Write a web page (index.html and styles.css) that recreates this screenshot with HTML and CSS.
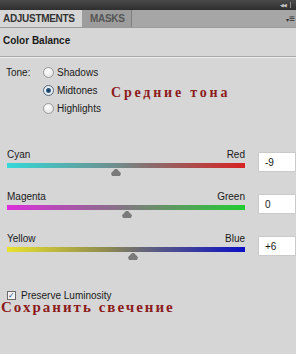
FILE: index.html
```html
<!DOCTYPE html>
<html lang="ru">
<head>
    <meta charset="UTF-8">
    <title>Color Balance</title>
    <link rel="stylesheet" href="styles.css">
</head>
<body>
    <div class="panel">
        <div class="titlebar">
            <span class="collapse">&#9664;&#9664;</span>
        </div>
        <div class="tabs">
            <div class="tab active">ADJUSTMENTS</div>
            <div class="tab">MASKS</div>
            <div class="tabfill">
                <span class="menu">&#9662;<span class="lines">&#8801;</span></span>
            </div>
        </div>
        <div class="header">Color Balance</div>

        <div class="tone">
            <div class="tone-label">Tone:</div>
            <div class="radios">
                <label class="radio"><span class="dot"></span><span class="rtext">Shadows</span></label>
                <label class="radio"><span class="dot on"></span><span class="rtext">Midtones</span><span class="note mid">Средние тона</span></label>
                <label class="radio"><span class="dot"></span><span class="rtext">Highlights</span></label>
            </div>
        </div>

        <div class="sliders">
            <div class="slider">
                <div class="track">
                    <div class="names"><span>Cyan</span><span>Red</span></div>
                    <div class="bar cr"></div>
                    <div class="thumbrow"><span class="thumb" style="left: 104px"></span></div>
                </div>
                <div class="value">-9</div>
            </div>
            <div class="slider">
                <div class="track">
                    <div class="names"><span>Magenta</span><span>Green</span></div>
                    <div class="bar mg"></div>
                    <div class="thumbrow"><span class="thumb" style="left: 115px"></span></div>
                </div>
                <div class="value">0</div>
            </div>
            <div class="slider">
                <div class="track">
                    <div class="names"><span>Yellow</span><span>Blue</span></div>
                    <div class="bar yb"></div>
                    <div class="thumbrow"><span class="thumb" style="left: 121px"></span></div>
                </div>
                <div class="value">+6</div>
            </div>
        </div>

        <label class="check"><span class="box">&#10003;</span>Preserve Luminosity</label>
        <div class="note keep">Сохранить свечение</div>
    </div>
</body>
</html>
```

FILE: styles.css
```css
body {
    margin: 0;
    background: #d6d6d6;
    font-family: "Liberation Sans", Arial, sans-serif;
    font-size: 10px;
    color: #1a1a1a;
}

.panel {
    width: 296px;
    height: 354px;
    background: #d6d6d6;
    overflow: hidden;
}

.titlebar {
    height: 10px;
    background: linear-gradient(to bottom, #4a4a4a, #2e2e2e);
    display: flex;
    justify-content: flex-end;
    align-items: center;
    padding-right: 5px;
}

.collapse {
    color: #c4c4c4;
    font-size: 5px;
    letter-spacing: -1px;
    border-right: 1px solid #8a8a8a;
    padding-right: 4px;
    line-height: 6px;
}

.tabs {
    display: flex;
    height: 17px;
    background: #a6a6a6;
    border-bottom: 1px solid #9a9a9a;
}

.tab {
    font-weight: bold;
    font-size: 10px;
    letter-spacing: -0.3px;
    line-height: 18px;
    width: 50px;
    box-sizing: border-box;
    padding-left: 8px;
    color: #555;
    background: #9d9d9d;
    border-right: 1px solid #808080;
}

.tab.active {
    width: 82px;
    padding-left: 3px;
    background: #d6d6d6;
    color: #333;
    border-right: none;
}

.tabfill {
    flex: 1;
    display: flex;
    justify-content: flex-end;
    align-items: center;
    padding-right: 1px;
}

.menu {
    color: #333;
    font-size: 6px;
}

.lines {
    font-size: 10px;
}

.header {
    font-weight: bold;
    font-size: 10px;
    padding: 7px 0 0 3px;
    height: 21px;
    border-bottom: 1px solid #a8a8a8;
    box-shadow: 0 1px 0 #ececec;
}

.tone {
    display: flex;
    padding: 9px 0 0 6px;
}

.tone-label {
    width: 37px;
    line-height: 13px;
}

.radios {
    display: flex;
    flex-direction: column;
    gap: 5px;
}

.radio {
    display: flex;
    align-items: center;
    height: 13px;
}

.rtext {
    width: 54px;
}

.dot {
    width: 11px;
    height: 11px;
    border-radius: 50%;
    border: 1px solid #9a9a9a;
    background: radial-gradient(circle at 40% 35%, #ffffff, #dcdcdc);
    margin-right: 3px;
    box-sizing: border-box;
}

.dot.on {
    border-color: #5a6b80;
    background: radial-gradient(circle, #1a3550 0, #2c5a86 2px, #eef2f6 3px, #d0d6dc 100%);
}

.note {
    font-family: "Liberation Serif", "DejaVu Serif", serif;
    font-weight: bold;
    color: #8c1c1c;
}

.note.mid {
    font-size: 14px;
    letter-spacing: 2.8px;
    padding-top: 4px;
    white-space: nowrap;
}

.sliders {
    display: flex;
    flex-direction: column;
    gap: 14px;
    padding: 34px 0 0 7px;
}

.slider {
    display: flex;
    align-items: flex-start;
}

.track {
    width: 238px;
}

.names {
    display: flex;
    justify-content: space-between;
    height: 14px;
    line-height: 12px;
}

.bar {
    height: 5px;
}

.bar.cr {
    background: linear-gradient(to right, #35d8d8, #6f8f8f 45%, #8a6d6d 60%, #d82222);
}

.bar.mg {
    background: linear-gradient(to right, #dc2edc, #8f6a8f 42%, #6f8a6f 60%, #22cc33);
}

.bar.yb {
    background: linear-gradient(to right, #e8e22e, #8e8a50 42%, #5f5f80 60%, #0c10c4);
}

.thumbrow {
    position: relative;
    height: 9px;
}

.thumb {
    position: absolute;
    top: 1px;
    width: 10px;
    height: 7px;
    background: #7a7a7a;
    clip-path: polygon(40% 0, 60% 0, 100% 60%, 90% 100%, 10% 100%, 0 60%);
}

.value {
    margin: 3px 0 0 13px;
    width: 38px;
    height: 20px;
    box-sizing: border-box;
    background: #fff;
    border: 1px solid #cacaca;
    padding: 4px 0 0 6px;
}

.check {
    display: flex;
    align-items: center;
    margin: 29px 0 0 7px;
    height: 10px;
}

.box {
    width: 9px;
    height: 9px;
    box-sizing: border-box;
    border: 1px solid #6a6a6a;
    background: #f4f4f4;
    color: #2a4a8a;
    font-size: 8px;
    line-height: 8px;
    text-align: center;
    margin-right: 5px;
}

.note.keep {
    font-size: 15px;
    letter-spacing: 2px;
    line-height: 15px;
    padding-left: 1px;
}
```
